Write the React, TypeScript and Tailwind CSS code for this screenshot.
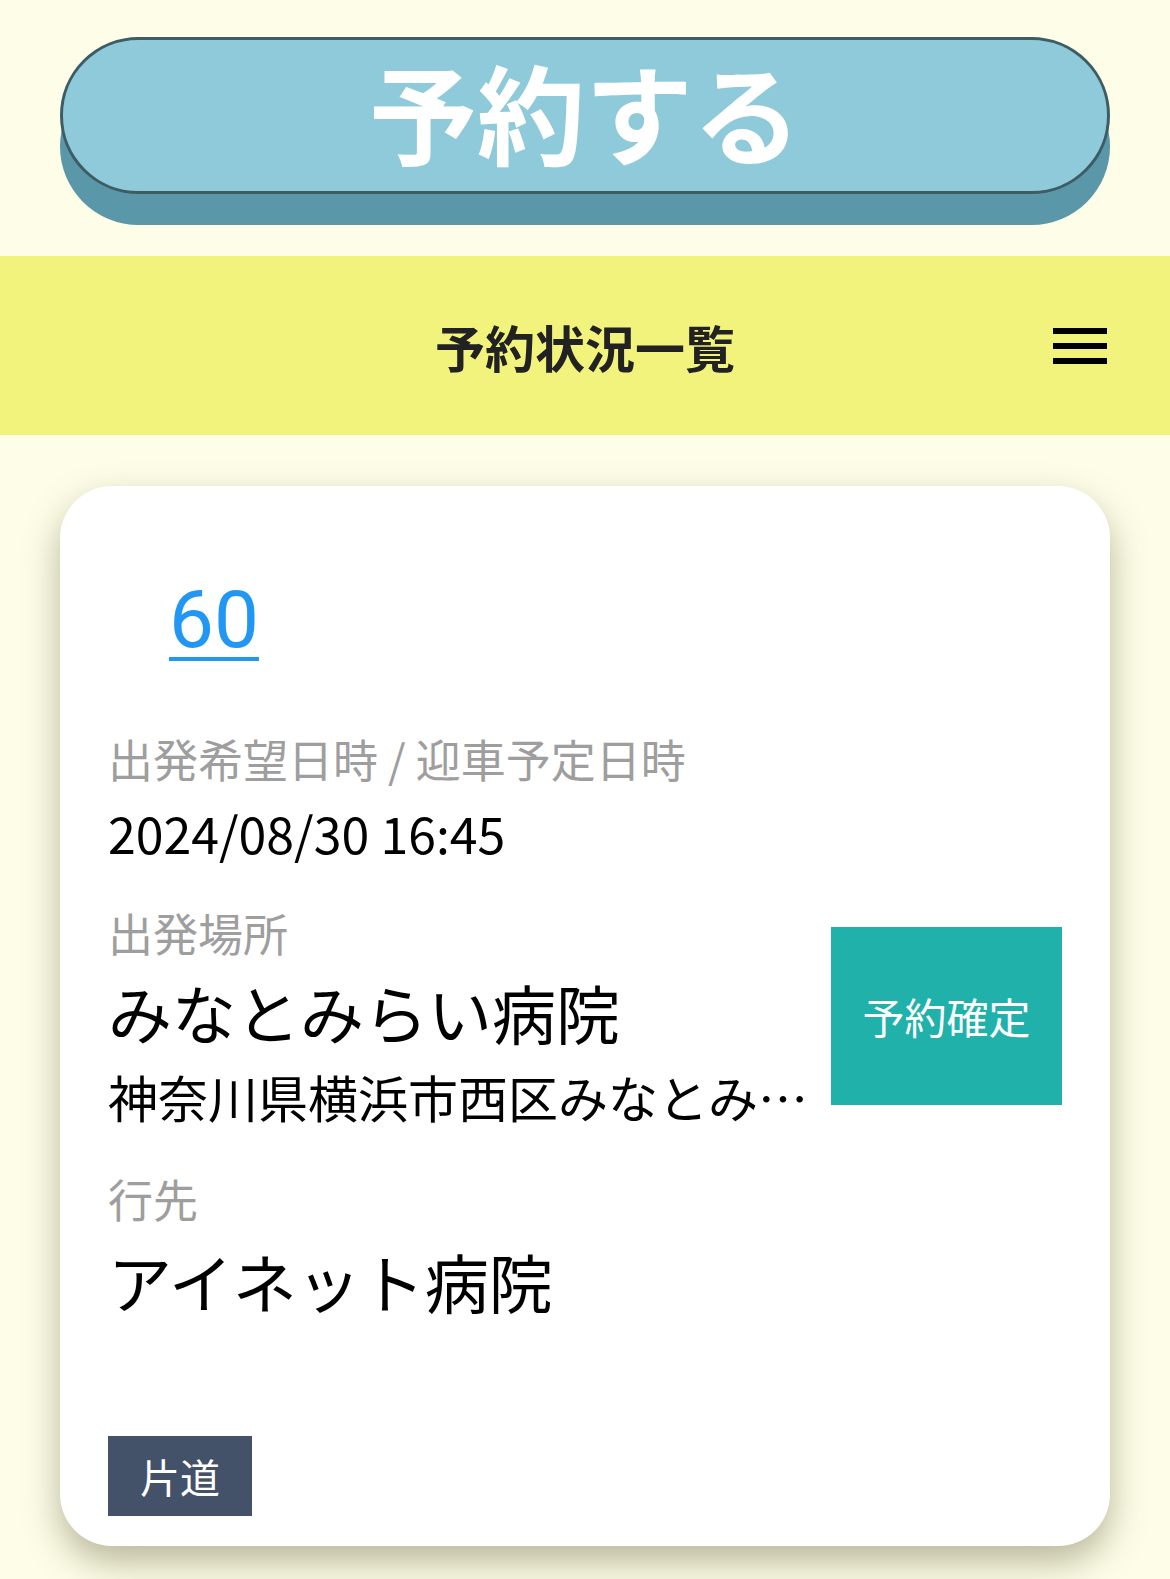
import React from "react";

const jp = "font-['Noto_Sans_CJK_JP','Noto_Sans',sans-serif]";

function Field({ label, children }: { label: string; children: React.ReactNode }) {
  return (
    <div>
      <div className="text-[45px] leading-[60px] text-[#9e9e9e]">{label}</div>
      {children}
    </div>
  );
}

export default function App() {
  return (
    <div className={`min-h-[1579px] w-full bg-[#fefde8] ${jp} pt-[37px] pb-[34px]`}>
      {/* Reserve button */}
      <div className="mx-[60px]">
        <button className="flex h-[157px] w-full items-center justify-center rounded-full border-[3px] border-[#3d5c63] bg-[#8fcadb] pb-[12px] shadow-[0_31px_0_#5a97a8]">
          <span className="text-[108px] font-bold leading-none text-white">予約する</span>
        </button>
      </div>

      {/* Header */}
      <header className="mt-[62px] grid h-[179px] grid-cols-[1fr_auto_1fr] items-center bg-[#f2f37c]">
        <div />
        <h1 className="text-[50px] font-bold leading-none text-[#222]">予約状況一覧</h1>
        <div className="flex justify-end pr-[63px]">
          <div className="flex w-[54px] flex-col gap-[9px]">
            <span className="block h-[6px] bg-black" />
            <span className="block h-[6px] bg-black" />
            <span className="block h-[6px] bg-black" />
          </div>
        </div>
      </header>

      {/* Card */}
      <main className="mx-[60px] mt-[51px] rounded-[52px] bg-white px-[48px] pt-[89px] pb-[30px] shadow-[0_16px_36px_rgba(80,80,40,0.4)]">
        <div className="pl-[61px]">
          <a
            href="#"
            className="font-['Roboto','Noto_Sans',sans-serif] text-[80px] leading-[90px] text-[#2196f3] underline decoration-[4px] underline-offset-[10px]"
          >
            60
          </a>
        </div>

        <div className="mt-[64px]">
          <Field label="出発希望日時 / 迎車予定日時">
            <div className="mt-[11px] text-[50px] leading-[64px] text-black">2024/08/30 16:45</div>
          </Field>
        </div>

        <div className="mt-[39px] flex items-center gap-[14px]">
          <div className="min-w-0 flex-1">
            <Field label="出発場所">
              <div className="mt-[8px] text-[64px] leading-[80px] text-black">みなとみらい病院</div>
              <div className="mt-[13px] truncate text-[50px] leading-[64px] text-black">
                神奈川県横浜市西区みなとみらい3丁目7-3
              </div>
            </Field>
          </div>
          <div className="flex h-[178px] w-[231px] shrink-0 items-center justify-center bg-[#20b2aa]">
            <span className="text-[42px] leading-none text-white">予約確定</span>
          </div>
        </div>

        <div className="mt-[41px]">
          <Field label="行先">
            <div className="mt-[11px] text-[64px] leading-[80px] text-black">アイネット病院</div>
          </Field>
        </div>

        <div className="mt-[116px] flex">
          <span className="flex h-[80px] w-[144px] items-center justify-center bg-[#435269] text-[40px] leading-none text-white">
            片道
          </span>
        </div>
      </main>
    </div>
  );
}
